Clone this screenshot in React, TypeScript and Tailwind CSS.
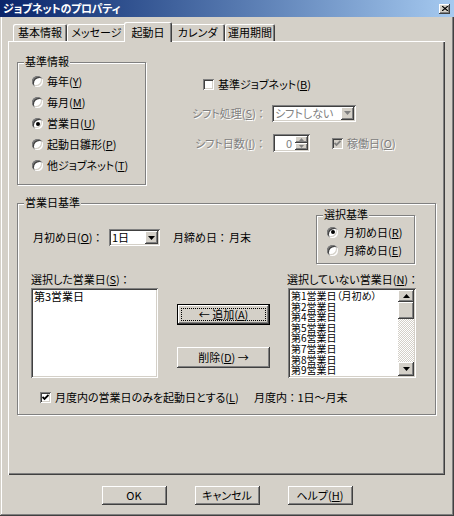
import React from "react";

const raised =
  "bg-[#d4d0c8] shadow-[inset_-1px_-1px_#404040,inset_1px_1px_#ffffff,inset_-2px_-2px_#808080,inset_2px_2px_#d4d0c8]";
const sunken =
  "shadow-[inset_1px_1px_#808080,inset_-1px_-1px_#ffffff,inset_2px_2px_#404040,inset_-2px_-2px_#d4d0c8]";
const grayText = "text-[#808080] [text-shadow:1px_1px_0_#ffffff]";

const K = ({ c }: { c: string }) => (
  <span className="underline underline-offset-[1px]">{c}</span>
);

const Tri = ({ up = false, gray = false, w = 7 }: { up?: boolean; gray?: boolean; w?: number }) => {
  const h = Math.ceil(w / 2);
  return (
    <svg width={w} height={h} viewBox={`0 0 ${w} ${h}`}>
      <polygon
        points={up ? `0,${h} ${w},${h} ${w / 2},0` : `0,0 ${w},0 ${w / 2},${h}`}
        fill={gray ? "#808080" : "#000000"}
      />
    </svg>
  );
};

const Radio = ({ checked = false }: { checked?: boolean }) => (
  <span
    className={`w-[11px] h-[11px] rounded-full bg-white flex items-center justify-center shrink-0 ${sunken}`}
  >
    {checked && <span className="w-[4px] h-[4px] rounded-full bg-black" />}
  </span>
);

const Check = ({ checked = false, disabled = false }: { checked?: boolean; disabled?: boolean }) => (
  <span
    className={`w-[11px] h-[11px] shrink-0 flex items-center justify-center ${
      disabled ? "bg-[#d4d0c8]" : "bg-white"
    } ${sunken}`}
  >
    {checked && (
      <svg width="7" height="7" viewBox="0 0 7 7">
        <polyline
          points="0.5,3 2.5,5 6.5,1"
          fill="none"
          stroke={disabled ? "#808080" : "#000000"}
          strokeWidth="1.8"
        />
      </svg>
    )}
  </span>
);

const GroupBox = ({
  title,
  className,
  children,
}: {
  title: string;
  className: string;
  children: React.ReactNode;
}) => (
  <div
    className={`border border-[#808080] shadow-[inset_1px_1px_#ffffff,1px_1px_#ffffff] flex flex-col shrink-0 ${className}`}
  >
    <span className="-mt-[8px] ml-[6px] px-[1px] w-fit bg-[#d4d0c8] leading-[13px]">
      {title}
    </span>
    {children}
  </div>
);

const Combo = ({
  text,
  className,
  disabled = false,
}: {
  text: string;
  className: string;
  disabled?: boolean;
}) => (
  <div className={`h-[17px] bg-white p-[2px] flex items-center shrink-0 ${sunken} ${className}`}>
    <span className={`flex-1 pl-[1px] leading-[13px] ${disabled ? "text-[#808080]" : ""}`}>
      {text}
    </span>
    <span className={`w-[13px] h-[13px] flex items-center justify-center ${raised}`}>
      <Tri gray={disabled} />
    </span>
  </div>
);

const Spin = () => (
  <div className={`w-[37px] h-[18px] bg-white p-[2px] flex shrink-0 ${sunken}`}>
    <span className="flex-1 text-right pr-[3px] leading-[14px] text-[#808080]">0</span>
    <div className="w-[13px] flex flex-col">
      <span className={`flex-1 flex items-center justify-center ${raised}`}>
        <Tri up gray w={5} />
      </span>
      <span className={`flex-1 flex items-center justify-center ${raised}`}>
        <Tri gray w={5} />
      </span>
    </div>
  </div>
);

const tabs = [
  { label: "基本情報", w: "w-[54px]" },
  { label: "メッセージ", w: "w-[59px]" },
  { label: "起動日", w: "w-[48px]", active: true },
  { label: "カレンダ", w: "w-[55px]" },
  { label: "運用期間", w: "w-[50px]" },
];

const baseRadios = [
  { label: "毎年", key: "Y" },
  { label: "毎月", key: "M" },
  { label: "営業日", key: "U", checked: true },
  { label: "起動日雛形", key: "P" },
  { label: "他ジョブネット", key: "T" },
];

const unselected = [
  "第1営業日（月初め）",
  "第2営業日",
  "第4営業日",
  "第5営業日",
  "第6営業日",
  "第7営業日",
  "第8営業日",
  "第9営業日",
];

export default function App() {
  return (
    <div className="w-[454px] h-[516px] bg-[#d4d0c8] flex flex-col overflow-hidden text-[11px] leading-[13px] text-black font-['Noto_Sans_CJK_JP','Noto_Sans_CJK_SC',sans-serif] [font-feature-settings:'palt'] shadow-[inset_-1px_-1px_#404040,inset_1px_1px_#d4d0c8,inset_-2px_-2px_#808080,inset_2px_2px_#ffffff]">
      {/* title bar */}
      <div className="h-[17px] shrink-0 bg-linear-to-r from-[#0a246a] to-[#a6caf0] flex items-center pl-[3px]">
        <span className="text-white font-bold tracking-[-0.3px]">ジョブネットのプロパティ</span>
        <span className={`ml-auto mr-[4px] w-[11px] h-[10px] flex items-center justify-center ${raised}`}>
          <svg width="6" height="5" viewBox="0 0 6 5">
            <path d="M0 0 L6 5 M6 0 L0 5" stroke="#000" strokeWidth="1.2" />
          </svg>
        </span>
      </div>

      <div className="pl-[8px] flex flex-col">
        {/* tabs */}
        <div className="mt-[5px] pl-[5px] h-[19px] flex items-end">
          {tabs.map((t) =>
            t.active ? (
              <div
                key={t.label}
                className={`${t.w} h-[20px] -mx-[2px] -mb-[1px] relative z-10 rounded-t-[2px] bg-[#d4d0c8] flex items-center justify-center pt-[1px] shadow-[inset_1px_1px_#ffffff,inset_-1px_0_#404040,inset_-2px_0_#808080]`}
              >
                {t.label}
              </div>
            ) : (
              <div
                key={t.label}
                className={`${t.w} h-[17px] rounded-t-[2px] flex items-center justify-center shadow-[inset_1px_1px_#ffffff,inset_-1px_0_#404040,inset_-2px_0_#808080]`}
              >
                {t.label}
              </div>
            )
          )}
        </div>

        {/* tab panel */}
        <div className="w-[437px] h-[434px] bg-[#d4d0c8] pl-[9px] pt-[21px] flex flex-col shadow-[inset_1px_1px_#ffffff,inset_-1px_-1px_#404040,inset_-2px_-2px_#808080]">
          <div className="flex items-start">
            <GroupBox title="基準情報" className="w-[129px] h-[123px]">
              <div className="mt-[3px] flex flex-col">
                {baseRadios.map((r) => (
                  <div key={r.key} className="h-[21px] flex items-center pl-[14px] gap-[4px]">
                    <Radio checked={r.checked} />
                    <span>
                      {r.label}(<K c={r.key} />)
                    </span>
                  </div>
                ))}
              </div>
            </GroupBox>

            <div className="ml-[46px] flex flex-col">
              <div className="mt-[13px] h-[18px] flex items-center pl-[11px] gap-[4px]">
                <Check />
                <span>
                  基準ジョブネット(<K c="B" />)
                </span>
              </div>
              <div className="mt-[11px] h-[18px] flex items-center">
                <span className={`w-[80px] ${grayText}`}>
                  シフト処理(<K c="S" />) ：
                </span>
                <Combo text="シフトしない" className="w-[84px]" disabled />
              </div>
              <div className="mt-[12px] h-[18px] flex items-center">
                <span className={`ml-[3px] w-[78px] ${grayText}`}>
                  シフト日数(<K c="I" />) ：
                </span>
                <Spin />
                <div className="ml-[22px] flex items-center gap-[4px]">
                  <Check checked disabled />
                  <span className={grayText}>
                    稼働日(<K c="O" />)
                  </span>
                </div>
              </div>
            </div>
          </div>

          <GroupBox title="営業日基準" className="mt-[18px] w-[419px] h-[212px]">
            <div className="mt-[6px] flex items-start">
              <div className="w-[298px] pl-[15px] pt-[14px] flex items-center">
                <span className="w-[76px] h-[17px] flex items-center">
                  月初め日(<K c="O" />) ：
                </span>
                <Combo text="1日" className="w-[51px]" />
                <span className="ml-[13px] w-[56px]">月締め日 ：</span>
                <span>月末</span>
              </div>
              <GroupBox title="選択基準" className="w-[99px] h-[49px]">
                <div className="mt-[2px] flex flex-col">
                  <div className="h-[18px] flex items-center pl-[10px] gap-[6px]">
                    <Radio checked />
                    <span>
                      月初め日(<K c="R" />)
                    </span>
                  </div>
                  <div className="h-[18px] flex items-center pl-[10px] gap-[6px]">
                    <Radio />
                    <span>
                      月締め日(<K c="E" />)
                    </span>
                  </div>
                </div>
              </GroupBox>
            </div>

            <div className="mt-[9px] pl-[13px] flex">
              <span className="w-[256px]">
                選択した営業日(<K c="S" />) ：
              </span>
              <span>
                選択していない営業日(<K c="N" />) ：
              </span>
            </div>

            <div className="mt-[2px] pl-[13px] flex items-start">
              <div className={`w-[127px] h-[90px] bg-white px-[3px] pt-[3px] leading-[11px] ${sunken}`}>
                第3営業日
              </div>
              <div className="ml-[19px] w-[93px] flex flex-col">
                <button
                  type="button"
                  className={`mt-[16px] h-[21px] border border-black p-[3px] ${raised}`}
                >
                  <span className="h-full border border-dotted border-black flex items-center justify-center">
                    ← 追加(<K c="A" />)
                  </span>
                </button>
                <button
                  type="button"
                  className={`mt-[22px] h-[21px] flex items-center justify-center ${raised}`}
                >
                  削除(<K c="D" />) →
                </button>
              </div>
              <div className={`ml-[18px] w-[128px] h-[90px] bg-white p-[2px] flex ${sunken}`}>
                <div className="flex-1 pl-[1px] pt-[1px] text-[10px] leading-[10.6px] overflow-hidden">
                  {unselected.map((s) => (
                    <div key={s}>{s}</div>
                  ))}
                </div>
                <div className="w-[16px] flex flex-col">
                  <span className={`h-[12px] flex items-center justify-center ${raised}`}>
                    <Tri up />
                  </span>
                  <span className={`h-[17px] ${raised}`} />
                  <span className="flex-1 bg-[repeating-conic-gradient(#ffffff_0%_25%,#d4d0c8_0%_50%)] bg-[length:2px_2px]" />
                  <span className={`h-[14px] flex items-center justify-center ${raised}`}>
                    <Tri />
                  </span>
                </div>
              </div>
            </div>

            <div className="mt-[12px] h-[14px] pl-[22px] flex items-center">
              <div className="w-[214px] flex items-center gap-[4px]">
                <Check checked />
                <span>
                  月度内の営業日のみを起動日とする(<K c="L" />)
                </span>
              </div>
              <span>月度内 ： 1日～月末</span>
            </div>
          </GroupBox>
        </div>
      </div>

      {/* dialog buttons */}
      <div className="mt-[11px] flex justify-center gap-[28px]">
        <button type="button" className={`w-[65px] h-[19px] flex items-center justify-center ${raised}`}>
          OK
        </button>
        <button type="button" className={`w-[65px] h-[19px] flex items-center justify-center ${raised}`}>
          キャンセル
        </button>
        <button type="button" className={`w-[65px] h-[19px] flex items-center justify-center ${raised}`}>
          ヘルプ(<K c="H" />)
        </button>
      </div>
    </div>
  );
}
